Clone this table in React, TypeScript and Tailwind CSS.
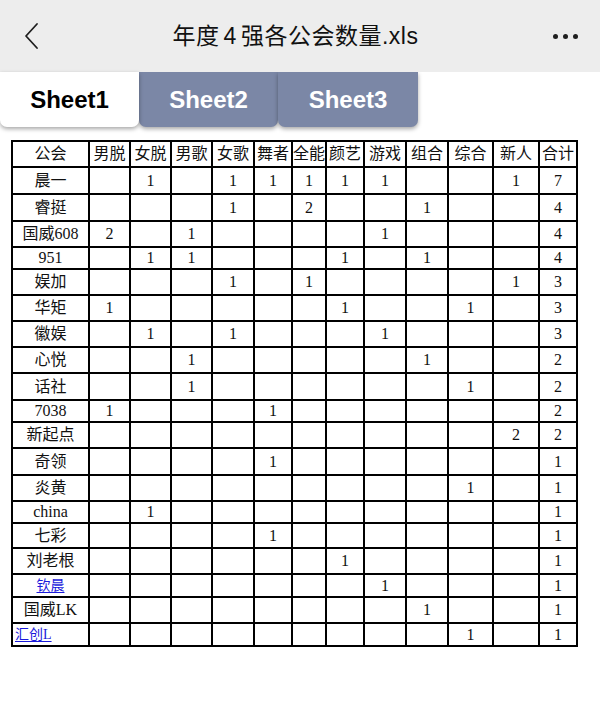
import React from 'react'

// 表头与各列宽度（像素，按线到线测量）
const headers = ['公会', '男脱', '女脱', '男歌', '女歌', '舞者', '全能', '颜艺', '游戏', '组合', '综合', '新人', '合计']
const colWidths = [77, 41, 41, 41, 42, 38, 34, 38, 42, 42, 45, 46, 38]

type Row = {
  name: string
  cells: (number | null)[]
  h: number
  link?: 'center' | 'left'
}

const _ = null

const rows: Row[] = [
  { name: '晨一', cells: [_, 1, _, 1, 1, 1, 1, 1, _, _, 1, 7], h: 27 },
  { name: '睿挺', cells: [_, _, _, 1, _, 2, _, _, 1, _, _, 4], h: 27 },
  { name: '国威608', cells: [2, _, 1, _, _, _, _, 1, _, _, _, 4], h: 26 },
  { name: '951', cells: [_, 1, 1, _, _, _, 1, _, 1, _, _, 4], h: 22 },
  { name: '娱加', cells: [_, _, _, 1, _, 1, _, _, _, _, 1, 3], h: 26 },
  { name: '华矩', cells: [1, _, _, _, _, _, 1, _, _, 1, _, 3], h: 26 },
  { name: '徽娱', cells: [_, 1, _, 1, _, _, _, 1, _, _, _, 3], h: 26 },
  { name: '心悦', cells: [_, _, 1, _, _, _, _, _, 1, _, _, 2], h: 26 },
  { name: '话社', cells: [_, _, 1, _, _, _, _, _, _, 1, _, 2], h: 27 },
  { name: '7038', cells: [1, _, _, _, 1, _, _, _, _, _, _, 2], h: 22 },
  { name: '新起点', cells: [_, _, _, _, _, _, _, _, _, _, 2, 2], h: 26 },
  { name: '奇领', cells: [_, _, _, _, 1, _, _, _, _, _, _, 1], h: 27 },
  { name: '炎黄', cells: [_, _, _, _, _, _, _, _, _, 1, _, 1], h: 26 },
  { name: 'china', cells: [_, 1, _, _, _, _, _, _, _, _, _, 1], h: 22 },
  { name: '七彩', cells: [_, _, _, _, 1, _, _, _, _, _, _, 1], h: 25 },
  { name: '刘老根', cells: [_, _, _, _, _, _, 1, _, _, _, _, 1], h: 26 },
  { name: '钦晨', cells: [_, _, _, _, _, _, _, 1, _, _, _, 1], h: 22, link: 'center' },
  { name: '国威LK', cells: [_, _, _, _, _, _, _, _, 1, _, _, 1], h: 26 },
  { name: '汇创L', cells: [_, _, _, _, _, _, _, _, _, 1, _, 1], h: 22, link: 'left' },
]

function TopBar() {
  return (
    <header className="h-[72px] bg-[#ededed] flex items-center px-[20px] relative">
      <svg width="20" height="28" viewBox="0 0 20 28" className="ml-[2px]" aria-hidden="true">
        <path d="M15 2 L4 14 L15 26" fill="none" stroke="#1f1f1f" strokeWidth="1.8" strokeLinecap="round" strokeLinejoin="round" />
      </svg>
      <h1 className="flex-1 text-center text-[23px] text-[#111] font-['Liberation_Sans','Noto_Sans_CJK_SC',sans-serif] tracking-[0.5px] pr-[4px]">
        年度<span className="mx-[4px]">4</span>强各公会数量.xls
      </h1>
      <div className="flex items-center gap-[5px] mr-[2px]">
        <span className="w-[5px] h-[5px] rounded-full bg-[#1f1f1f]" />
        <span className="w-[5px] h-[5px] rounded-full bg-[#1f1f1f]" />
        <span className="w-[5px] h-[5px] rounded-full bg-[#1f1f1f]" />
      </div>
    </header>
  )
}

function SheetTabs() {
  const tab = "h-[55px] flex items-center justify-center text-[24px] font-bold font-['Liberation_Sans',Arial,sans-serif] rounded-b-[7px] shadow-[0_2px_4px_rgba(0,0,0,0.35)]"
  return (
    <nav className="flex bg-white">
      <div className={`${tab} w-[139px] bg-white text-black relative z-10`}>Sheet1</div>
      <div className={`${tab} w-[139px] bg-[#7b87a6] text-white`}>Sheet2</div>
      <div className={`${tab} w-[140px] bg-[#7b87a6] text-white`}>Sheet3</div>
    </nav>
  )
}

export default function App() {
  return (
    <div className="w-[600px] h-[704px] bg-white overflow-hidden">
      <TopBar />
      <SheetTabs />

      <main className="pt-[13px] pl-[11px]">
        <table className="table-fixed border-collapse border-2 border-black text-[16px] text-[#111] font-['Liberation_Serif','Noto_Sans_CJK_SC',serif] leading-[20px]">
          <colgroup>
            {colWidths.map((w, i) => (
              <col key={i} style={{ width: w }} />
            ))}
          </colgroup>
          <thead>
            <tr>
              {headers.map(h => (
                <th key={h} className="h-[26px] p-0 font-normal border-2 border-black text-center whitespace-nowrap">
                  {h}
                </th>
              ))}
            </tr>
          </thead>
          <tbody>
            {rows.map(r => (
              <tr key={r.name}>
                <td
                  className={`p-0 border-2 border-black whitespace-nowrap ${r.link === 'left' ? 'text-left pl-[2px]' : 'text-center'}`}
                  style={{ height: r.h }}
                >
                  {r.link ? (
                    <a href="#" className="text-[14px] text-[#1a1adb] underline underline-offset-2">
                      {r.name}
                    </a>
                  ) : (
                    r.name
                  )}
                </td>
                {r.cells.map((c, i) => (
                  <td key={i} className="p-0 border-2 border-black text-center">
                    {c ?? ''}
                  </td>
                ))}
              </tr>
            ))}
          </tbody>
        </table>
      </main>
    </div>
  )
}
